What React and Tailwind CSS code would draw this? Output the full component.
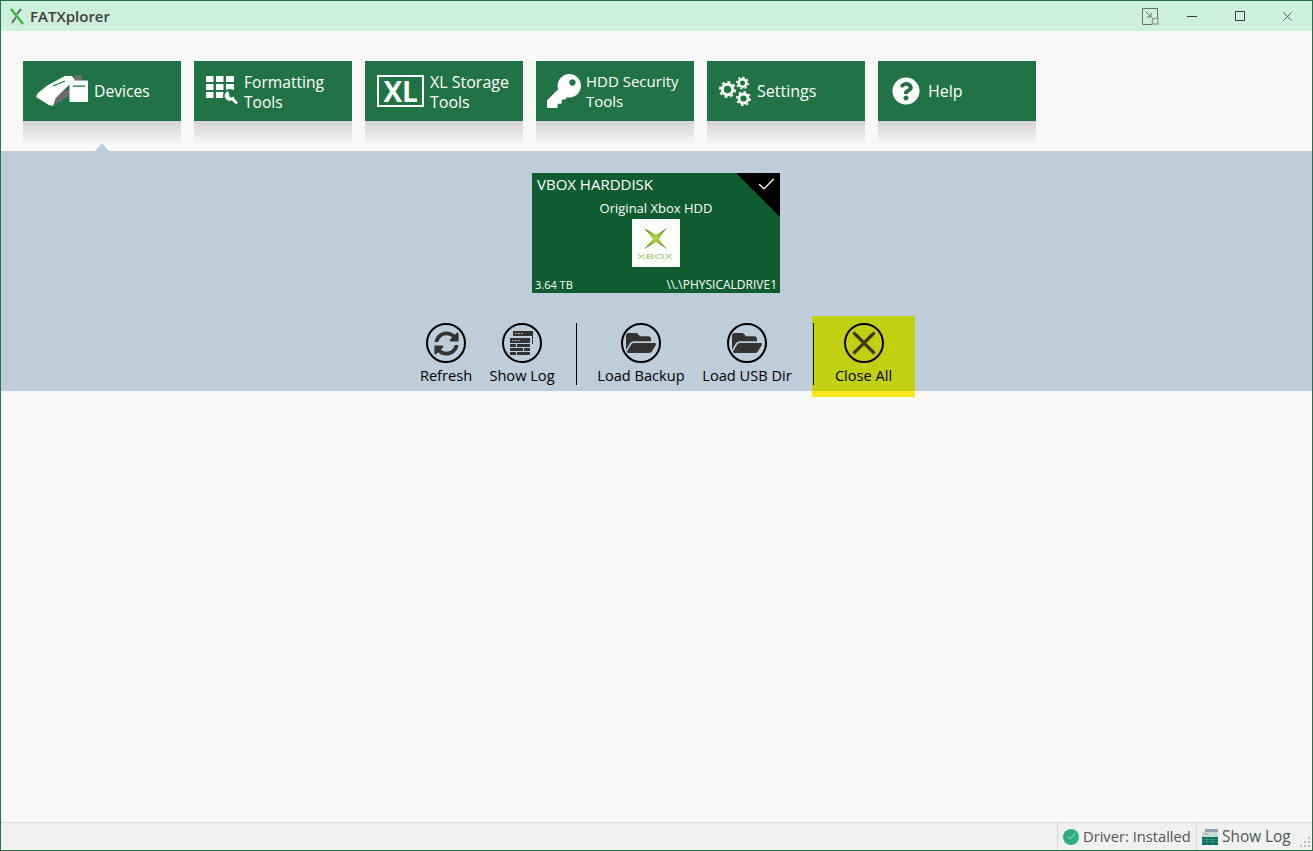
import React from 'react';
import { Check, X } from 'lucide-react';
import { FaKey, FaQuestionCircle, FaSyncAlt, FaFolderOpen } from 'react-icons/fa';

const DevicesIcon = () => (
  <svg width="54" height="33" viewBox="0 0 54 33">
    <path d="M1 22 L3 18 L13 10 L30 1 L37 1 L40 5 L35 9 L28 16 L21 23 L18 31 L14 30 Z" fill="#fff" />
    <path d="M18 31 L21 23 L28 16 L35 14 L35 20 L20 30 Z" fill="#6b6b6b" />
    <path d="M18 11 L30 6" stroke="#217346" strokeWidth="1.3" />
    <rect x="40" y="0" width="7" height="6" fill="#6e6e6e" />
    <rect x="34.5" y="5.5" width="18.5" height="21.5" fill="#fff" />
    <rect x="38" y="10.5" width="12" height="1.3" fill="#217346" />
  </svg>
);

const GridIcon = () => (
  <svg width="33" height="30" viewBox="0 0 33 30" fill="#fff">
    {[0, 8, 16].map((y) =>
      [0, 10, 20].map((x) => <rect key={`${x}-${y}`} x={x} y={y} width={x === 20 ? 8 : 7.5} height="6" />)
    )}
    <circle cx="24" cy="20" r="7" fill="#217346" />
    <path d="M22 15.5 a4.6 4.6 0 1 0 6 5.5 l-2.4 1 -2.4 -1.4 -0.4 -2.6 z" fill="#fff" stroke="#fff" strokeWidth="0.6" />
    <path d="M25.5 22 L31 27.5" stroke="#fff" strokeWidth="3" />
  </svg>
);

const XlIcon = () => (
  <div className="flex h-[32px] w-[47px] items-center justify-center border-2 border-white text-[28px] font-bold leading-none tracking-[-0.3px] text-white">
    XL
  </div>
);

const Gear = ({ cx, cy, r, sw, tr, tw }) => (
  <g fill="none" stroke="#fff">
    <circle cx={cx} cy={cy} r={r} strokeWidth={sw} />
    <circle cx={cx} cy={cy} r={tr} strokeWidth={tw} pathLength="16" strokeDasharray="1 1" />
  </g>
);

const GearsIcon = () => (
  <svg width="33" height="34" viewBox="0 0 33 34">
    <Gear cx={8.5} cy={15.5} r={5.2} sw={3} tr={7.6} tw={1.8} />
    <Gear cx={23.5} cy={9} r={3.8} sw={2.6} tr={5.8} tw={1.4} />
    <Gear cx={24.5} cy={24.5} r={4.5} sw={2.8} tr={6.7} tw={1.6} />
  </svg>
);

const tabs = [
  { icon: <DevicesIcon />, label: 'Devices', cls: 'pl-[12px] gap-[5px]', text: 'text-[15.7px]' },
  { icon: <GridIcon />, label: 'Formatting Tools', cls: 'pl-[12px] gap-[5px]', text: 'text-[15.6px] w-[90px] pt-[1px]' },
  { icon: <XlIcon />, label: 'XL Storage Tools', cls: 'pl-[12px] gap-[6px]', text: 'text-[16px] w-[90px] pt-[1px]' },
  { icon: <FaKey size={34} color="#fff" />, label: 'HDD Security Tools', cls: 'pl-[11px] gap-[5px]', text: 'text-[15px] w-[100px]' },
  { icon: <GearsIcon />, label: 'Settings', cls: 'pl-[12px] gap-[5px]', text: 'text-[16px]' },
  { icon: <FaQuestionCircle size={28} color="#fff" />, label: 'Help', cls: 'pl-[14px] gap-[8px]', text: 'text-[16px]' },
];

const Tab = ({ tab }) => (
  <div className="w-[158px]">
    <div className={`flex h-[60px] items-center bg-[#217346] text-white ${tab.cls}`}>
      {tab.icon}
      <span className={`leading-[20px] ${tab.text}`}>{tab.label}</span>
    </div>
    <div className="h-[24px] bg-gradient-to-b from-[#d4d4d4] to-[#f8f8f8]" />
  </div>
);

const XboxLogo = () => (
  <svg width="48" height="48" viewBox="0 0 48 48">
    <defs>
      <radialGradient id="xg" cx="0.5" cy="0.5" r="0.62">
        <stop offset="0" stopColor="#b4d83c" />
        <stop offset="0.55" stopColor="#8ab52e" />
        <stop offset="1" stopColor="#5f6b50" />
      </radialGradient>
    </defs>
    <rect width="48" height="48" fill="#fff" />
    <path d="M12 9 Q21 14 24 16 Q27 14 35 9 Q29 16 27 20 Q29 24 35 30 Q27 25 24 23 Q21 25 12 30 Q18 24 21 20 Q18 16 12 9 Z" fill="url(#xg)" />
    <text x="5" y="40" fontSize="8" textLength="36" lengthAdjust="spacingAndGlyphs" fill="#9cc86a" fontFamily="Liberation Sans, sans-serif">XBOX</text>
  </svg>
);

const Round = ({ children }) => (
  <div className="flex h-[40px] w-[40px] items-center justify-center rounded-full border-2 border-black">
    {children}
  </div>
);

const LogGlyph = () => (
  <svg width="26" height="26" viewBox="0 0 26 26" fill="#333">
    <rect x="4" y="1" width="20" height="5" />
    <rect x="23" y="6" width="1" height="8" />
    <rect x="1" y="8" width="20" height="5" />
    <rect x="1" y="14" width="20" height="11" />
    <g fill="#bfccda">
      <rect x="6" y="3" width="1.5" height="1" />
      <rect x="9" y="3" width="1.5" height="1" />
      <rect x="12" y="3" width="1.5" height="1" />
      <rect x="3" y="10" width="1.5" height="1" />
      <rect x="6" y="10" width="1.5" height="1" />
      <rect x="9" y="10" width="1.5" height="1" />
      <rect x="1" y="17" width="20" height="1" />
      <rect x="1" y="21" width="20" height="1" />
      <rect x="7" y="14" width="1" height="3" />
      <rect x="14" y="18" width="1" height="3" />
      <rect x="7" y="22" width="1" height="3" />
    </g>
  </svg>
);

const ActionBtn = ({ w, label, children, className = '' }) => (
  <div className={`flex flex-col items-center pt-[7px] ${w} ${className}`}>
    <Round>{children}</Round>
    <span className="mt-[2px] whitespace-nowrap text-[14.6px] leading-[20px] text-black">{label}</span>
  </div>
);

const ShowLogSmall = () => (
  <svg width="16" height="16" viewBox="0 0 16 16">
    <rect x="3" y="0" width="13" height="4" fill="#8fa3b5" />
    <rect x="0" y="3" width="16" height="5" fill="#c9d9d4" />
    <rect x="2" y="4.5" width="4" height="1" fill="#e0a070" />
    <rect x="0" y="8" width="16" height="8" fill="#0f6a5b" />
    <path d="M0 10.5 H16 M0 13 H16 M5 8 V16 M11 8 V16" stroke="#3fa58f" strokeWidth="0.7" />
  </svg>
);

export default function App() {
  return (
    <div className="flex h-[851px] w-[1313px] flex-col border border-[#217346] bg-[#f8f8f8] font-['Open_Sans',sans-serif]">
      {/* title bar */}
      <div className="flex h-[30px] items-center bg-[#cdefdd] pl-[9px]">
        <svg width="14" height="17" viewBox="0 0 14 17" fill="none">
          <path d="M7 6 L11 1" stroke="#4b5a4b" strokeWidth="1.8" />
          <path d="M6 9 L2 15" stroke="#6a756a" strokeWidth="2.2" />
          <path d="M1 1 L13 16" stroke="#3cb043" strokeWidth="2.4" />
        </svg>
        <span className="ml-[6px] text-[15px] font-semibold text-[#404040]">FATXplorer</span>
        <div className="ml-auto flex items-center">
          <svg width="17" height="17" viewBox="0 0 17 17" fill="none" stroke="#6a6a6a">
            <path d="M10 16.5 H0.5 V0.5 H15.5 V10" />
            <path d="M3.5 3.5 L9 9 M9 5 V9 H5" />
            <rect x="10.5" y="10.5" width="5.5" height="5.5" stroke="#8a9a90" strokeWidth="1.3" />
          </svg>
          <div className="ml-[28px] h-px w-[10px] bg-[#404040]" />
          <div className="ml-[38px] h-[10px] w-[10px] border border-[#404040]" />
          <X className="ml-[35px] mr-[17px]" size={15} color="#404040" strokeWidth={1.3} />
        </div>
      </div>

      {/* tabs */}
      <div className="relative flex h-[120px] gap-[13px] pl-[22px] pt-[30px]">
        {tabs.map((t) => (
          <Tab key={t.label} tab={t} />
        ))}
        <div className="absolute bottom-0 left-[94px] h-0 w-0 border-x-[7px] border-b-[8px] border-x-transparent border-b-[#bfccda]" />
      </div>

      {/* devices band */}
      <div className="relative h-[240px] bg-[#bfccda] pt-[22px]">
        <div className="relative ml-[531px] h-[120px] w-[248px] overflow-hidden bg-[#0e5c2f] text-white">
          <div className="pl-[5px] pt-[1px] text-[15px] leading-[20px]">VBOX HARDDISK</div>
          <div className="mt-[5px] text-center text-[13px] leading-[18px]">Original Xbox HDD</div>
          <div className="mt-[2px] flex justify-center">
            <XboxLogo />
          </div>
          <div className="absolute inset-x-[3px] bottom-0 flex justify-between text-[11px] leading-[17px]">
            <span>3.64 TB</span>
            <span className="text-[12px]">\\.\PHYSICALDRIVE1</span>
          </div>
          <svg className="absolute right-0 top-0" width="44" height="44" viewBox="0 0 44 44">
            <path d="M0 0 H44 V44 Z" fill="#000" />
          </svg>
          <Check className="absolute right-[3px] top-[1px]" size={21} color="#fff" strokeWidth={1.6} />
        </div>

        <div className="mt-[23px] flex pl-[420px]">
          <ActionBtn w="w-[50px]" label="Refresh">
            <FaSyncAlt size={25} color="#333" />
          </ActionBtn>
          <ActionBtn w="w-[66px]" label="Show Log" className="ml-[18px]">
            <LogGlyph />
          </ActionBtn>
          <div className="ml-[21px] mt-[7px] h-[62px] w-px bg-black" />
          <ActionBtn w="w-[86px]" label="Load Backup" className="ml-[21px]">
            <FaFolderOpen size={30} color="#333" />
          </ActionBtn>
          <ActionBtn w="w-[90px]" label="Load USB Dir" className="ml-[18px]">
            <FaFolderOpen size={30} color="#333" />
          </ActionBtn>
          <div className="relative ml-[20px] w-[103px]">
            <div className="h-[75px] bg-[#c1d010]" />
            <div className="h-[6px] bg-[#fce81a]" />
            <div className="absolute left-[1px] top-[7px] h-[62px] w-px bg-black" />
            <ActionBtn w="w-[103px]" label="Close All" className="absolute left-0 top-0">
              <svg width="24" height="24" viewBox="0 0 24 24" stroke="#3a3d05" strokeWidth="3.2">
                <path d="M1.5 1.5 L22.5 22.5 M22.5 1.5 L1.5 22.5" />
              </svg>
            </ActionBtn>
          </div>
        </div>
      </div>

      {/* empty content */}
      <div className="flex-1" />

      {/* status bar */}
      <div className="flex h-[28px] items-stretch border-t border-[#d9d9d9] bg-[#f0f0f0] text-[15px] text-[#555]">
        <div className="ml-auto flex w-[139px] items-center border-l border-[#d9d9d9] pl-[5px]">
          <div className="flex h-[16px] w-[16px] shrink-0 items-center justify-center rounded-full bg-[#2eae82]">
            <Check size={11} color="#d8f5ea" strokeWidth={1.6} />
          </div>
          <span className="ml-[4px] whitespace-nowrap text-[14.7px]">Driver: Installed</span>
        </div>
        <div className="relative flex w-[116px] items-center border-l border-[#d9d9d9] pl-[5px]">
          <ShowLogSmall />
          <span className="ml-[4px] whitespace-nowrap text-[15.4px]">Show Log</span>
          <svg className="absolute bottom-[2px] right-[1px]" width="11" height="11" viewBox="0 0 11 11" fill="#bbb">
            <rect x="8" y="0" width="2" height="2" />
            <rect x="4" y="4" width="2" height="2" />
            <rect x="8" y="4" width="2" height="2" />
            <rect x="0" y="8" width="2" height="2" />
            <rect x="4" y="8" width="2" height="2" />
            <rect x="8" y="8" width="2" height="2" />
          </svg>
        </div>
      </div>
    </div>
  );
}
